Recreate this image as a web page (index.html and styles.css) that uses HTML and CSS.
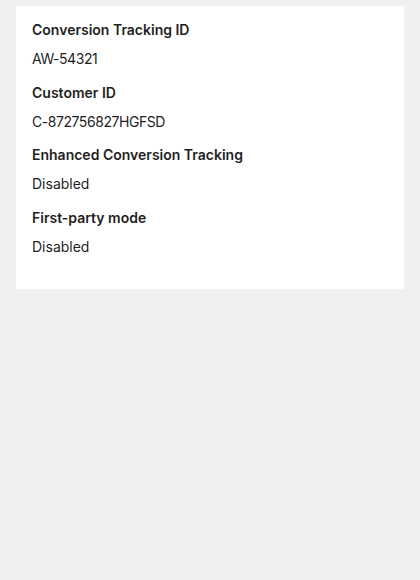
FILE: index.html
```html
<!DOCTYPE html>
<html>
<head>
<meta charset="utf-8">
<link rel="stylesheet" href="styles.css">
</head>
<body>
<div class="card">
  <div class="item">
    <div class="label">Conversion Tracking ID</div>
    <div class="value code">AW-54321</div>
  </div>
  <div class="item">
    <div class="label">Customer ID</div>
    <div class="value code">C-872756827HGFSD</div>
  </div>
  <div class="item">
    <div class="label">Enhanced Conversion Tracking</div>
    <div class="value">Disabled</div>
  </div>
  <div class="item">
    <div class="label">First-party mode</div>
    <div class="value">Disabled</div>
  </div>
</div>
</body>
</html>
```
FILE: styles.css
```css
html, body {
  margin: 0;
  padding: 0;
  background: #f0f0f0;
}
body {
  padding: 6px 16px;
  font-family: Inter, "Noto Sans", sans-serif;
  color: #1f1f1f;
}
.card {
  background: #ffffff;
  height: 283px;
  box-sizing: border-box;
  padding: 14px 16px;
  display: flex;
  flex-direction: column;
  gap: 13.5px;
}
.item {
  display: flex;
  flex-direction: column;
  gap: 9px;
}
.label {
  font-size: 14px;
  line-height: 20px;
  font-weight: 600;
}
.value {
  font-size: 14px;
  line-height: 20px;
  font-weight: 400;
}
.code {
  letter-spacing: -0.45px;
}
```
